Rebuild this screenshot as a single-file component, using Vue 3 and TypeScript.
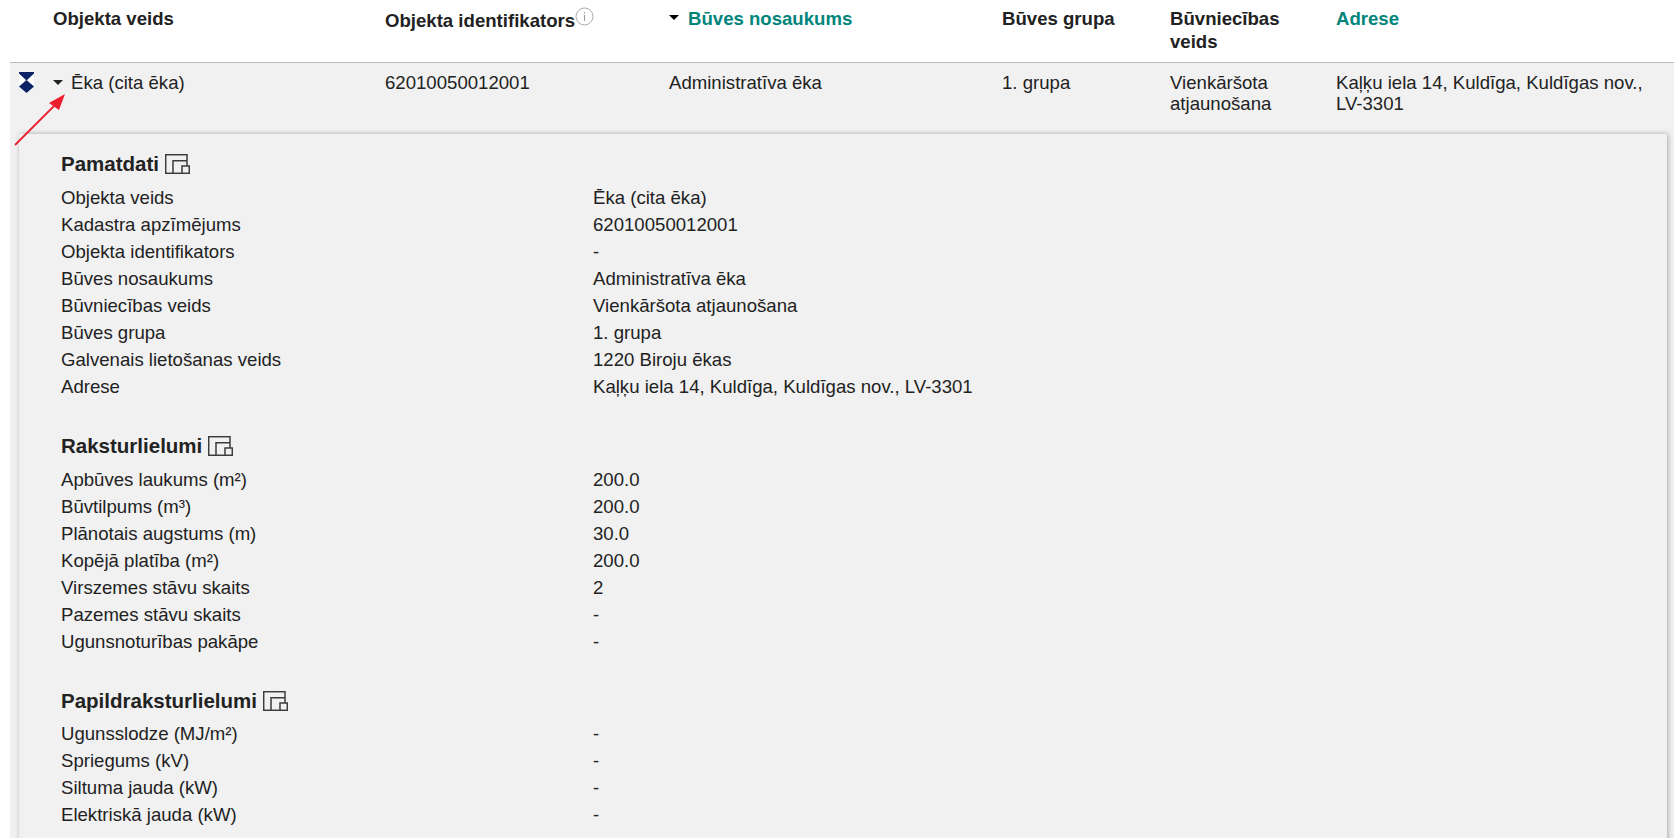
<script setup lang="ts">
interface Row { label: string; value: string }
interface Section { title: string; rows: Row[] }

const headers = [
  { text: 'Objekta veids', cls: 'h-first' },
  { text: 'Objekta identifikators', cls: 'h-id', info: true },
  { text: 'Būves nosaukums', cls: 'h-sort', sorted: true, link: true },
  { text: 'Būves grupa', cls: '' },
  { text: 'Būvniecības veids', cls: '' },
  { text: 'Adrese', cls: '', link: true },
]

const sections: Section[] = [
  {
    title: 'Pamatdati',
    rows: [
      { label: 'Objekta veids', value: 'Ēka (cita ēka)' },
      { label: 'Kadastra apzīmējums', value: '62010050012001' },
      { label: 'Objekta identifikators', value: '-' },
      { label: 'Būves nosaukums', value: 'Administratīva ēka' },
      { label: 'Būvniecības veids', value: 'Vienkāršota atjaunošana' },
      { label: 'Būves grupa', value: '1. grupa' },
      { label: 'Galvenais lietošanas veids', value: '1220 Biroju ēkas' },
      { label: 'Adrese', value: 'Kaļķu iela 14, Kuldīga, Kuldīgas nov., LV-3301' },
    ],
  },
  {
    title: 'Raksturlielumi',
    rows: [
      { label: 'Apbūves laukums (m²)', value: '200.0' },
      { label: 'Būvtilpums (m³)', value: '200.0' },
      { label: 'Plānotais augstums (m)', value: '30.0' },
      { label: 'Kopējā platība (m²)', value: '200.0' },
      { label: 'Virszemes stāvu skaits', value: '2' },
      { label: 'Pazemes stāvu skaits', value: '-' },
      { label: 'Ugunsnoturības pakāpe', value: '-' },
    ],
  },
  {
    title: 'Papildraksturlielumi',
    rows: [
      { label: 'Ugunsslodze (MJ/m²)', value: '-' },
      { label: 'Spriegums (kV)', value: '-' },
      { label: 'Siltuma jauda (kW)', value: '-' },
      { label: 'Elektriskā jauda (kW)', value: '-' },
    ],
  },
]
</script>

<template>
  <div class="page">
    <div class="grid head">
      <div v-for="h in headers" :key="h.text" class="th" :class="[h.cls, { link: h.link }]">
        <span v-if="h.sorted" class="caret head-caret"></span>
        <span>{{ h.text }}</span>
        <svg v-if="h.info" class="info" width="19" height="19" viewBox="0 0 19 19">
          <circle cx="9.5" cy="9.5" r="8.5" fill="#fff" stroke="#aaa" stroke-width="1" />
          <rect x="9" y="8" width="1" height="6" fill="#999" />
          <rect x="9" y="5" width="1" height="1.5" fill="#999" />
        </svg>
      </div>
    </div>

    <div class="body">
      <div class="grid row">
        <div class="first">
          <svg class="hourglass" width="15" height="21" viewBox="0 0 15 21">
            <path d="M0 0H15V14H0Z" fill="#fff" />
            <path d="M0 0H15V1.5L7.5 8.5L0 1.5Z" fill="#0b2265" />
            <path d="M7.5 8L15 14.5L7.5 21L0 14.5Z" fill="#0b2265" />
          </svg>
          <span class="caret row-caret"></span>
          <span>Ēka (cita ēka)</span>
        </div>
        <div>62010050012001</div>
        <div>Administratīva ēka</div>
        <div>1. grupa</div>
        <div>Vienkāršota<br />atjaunošana</div>
        <div>Kaļķu iela 14, Kuldīga, Kuldīgas nov., LV-3301</div>
      </div>

      <div class="panel">
        <section v-for="s in sections" :key="s.title" class="section">
          <h3 class="title">
            {{ s.title }}
            <svg class="copy" width="25" height="20" viewBox="0 0 25 20" fill="none" stroke="#3c3c3c" stroke-width="1.5">
              <rect x="0.7" y="0.7" width="21.3" height="18.6" />
              <path d="M8 19.3V6.7H22" />
              <rect x="17" y="12" width="7.3" height="7.3" fill="#f1f1f1" />
            </svg>
          </h3>
          <div v-for="r in s.rows" :key="r.label" class="kv">
            <div class="k">{{ r.label }}</div>
            <div>{{ r.value }}</div>
          </div>
        </section>
      </div>
    </div>

    <svg class="arrow" width="60" height="60" viewBox="0 0 60 60">
      <line x1="1" y1="53" x2="40" y2="14" stroke="#ee1f2d" stroke-width="1.8" />
      <path d="M51 2L35 11L45 18Z" fill="#ee1f2d" />
    </svg>
  </div>
</template>

<style>
html, body { margin: 0; overflow: hidden; background: #fff; }
</style>

<style scoped>
.page {
  position: relative;
  height: 100vh;
  overflow: hidden;
  font-family: "Liberation Sans", Arial, sans-serif;
  font-size: 18.6px;
  line-height: 21px;
  color: #222;
}
.grid {
  display: grid;
  grid-template-columns: 375px 284px 333px 168px 166px 328px;
}
.grid > :first-child { padding-left: 43px; }
.head {
  height: 63px;
  box-sizing: border-box;
  padding-top: 7px;
  margin-left: 10px;
  border-bottom: 1px solid #bbb;
  line-height: 23px;
}
.th { font-weight: 700; padding-right: 30px; }
.th:nth-child(2), .th:nth-child(3) { padding-right: 0; }
.h-id { padding-top: 2px; display: flex; align-items: flex-start; }
.h-sort { display: flex; align-items: flex-start; }
.link { color: #00857c; }
.info { margin-top: -2px; }
.caret {
  display: inline-block;
  width: 0;
  height: 0;
  border-left: 5px solid transparent;
  border-right: 5px solid transparent;
  border-top: 5px solid #222;
}
.head-caret { border-top-color: #000; margin: 8px 9px 0 0; }
.body {
  margin-left: 10px;
  background: #f1f1f1;
  height: 775px;
}
.row {
  padding-top: 9px;
  height: 71px;
  box-sizing: border-box;
}
.first { position: relative; display: flex; align-items: flex-start; }
.hourglass { position: absolute; left: 9px; top: 0; }
.row-caret { margin: 8px 8px 0 0; }
.panel {
  margin-left: 9px;
  width: 1648px;
  box-sizing: border-box;
  padding: 15px 42px 0;
  height: 800px;
  background: #f1f1f1;
  box-shadow: 1px 0 5px rgba(0, 0, 0, 0.3);
}
.section { margin-bottom: 30px; }
.section:first-child { margin-bottom: 31px; }
.title {
  margin: 0 0 7px;
  padding-top: 1px;
  font-size: 20.5px;
  line-height: 27px;
  font-weight: 700;
  display: flex;
  align-items: center;
  gap: 6px;
}
.section:last-child .title { padding-top: 2px; margin-bottom: 6px; }
.kv {
  display: flex;
  height: 27px;
  line-height: 27px;
}
.k { width: 532px; }
.arrow { position: absolute; left: 14px; top: 92px; }
</style>
